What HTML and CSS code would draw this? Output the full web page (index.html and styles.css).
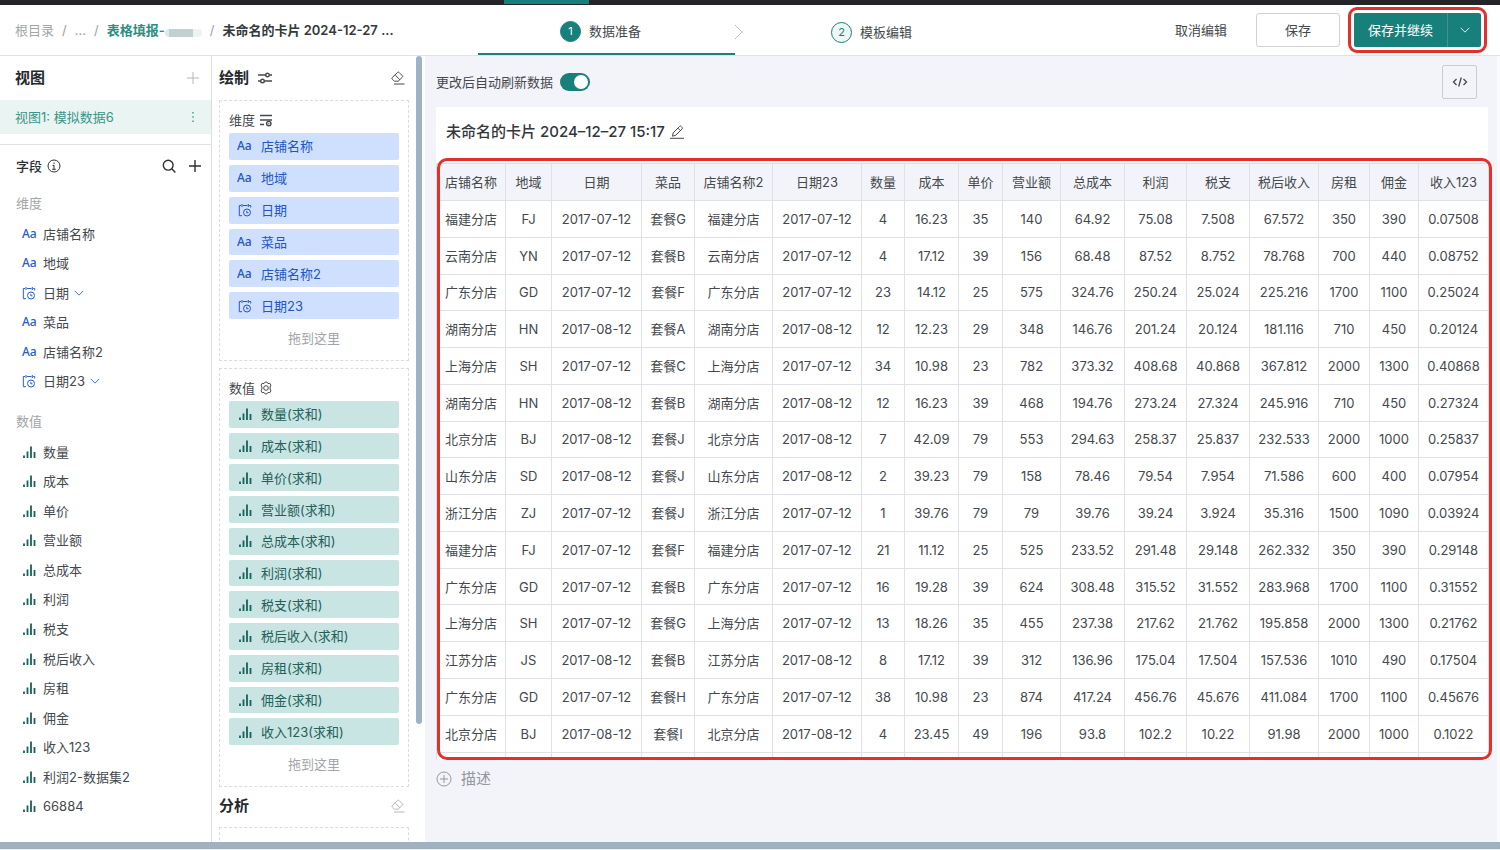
FILE: index.html
```html
<!DOCTYPE html>
<html lang="zh-CN">
<head>
  <meta charset="utf-8">
  <title>未命名的卡片 - 数据准备</title>
  <link rel="stylesheet" href="styles.css">
</head>
<body>
  <svg class="sprite" aria-hidden="true">
    <symbol id="i-plus" viewBox="0 0 14 14"><path d="M7 1v12M1 7h12"/></symbol>
    <symbol id="i-more" viewBox="0 0 14 14"><path d="M7 2v1.6M7 6.2v1.6M7 10.4V12"/></symbol>
    <symbol id="i-info" viewBox="0 0 14 14"><circle cx="7" cy="7" r="6"/><path d="M7 3.4v1.4M5.6 6.4H7v3.8M5.2 10.3h3.6"/></symbol>
    <symbol id="i-search" viewBox="0 0 14 14"><circle cx="6.2" cy="6.2" r="4.9"/><path d="M9.8 9.8l3.6 3.6"/></symbol>
    <symbol id="i-sliders" viewBox="0 0 14 14"><path d="M0 4h7.6M11.4 4H14M0 10h2.6M6.4 10H14"/><circle cx="9.5" cy="4" r="1.8"/><circle cx="4.5" cy="10" r="1.8"/></symbol>
    <symbol id="i-eraser" viewBox="0 0 14 14"><path d="M3.4 10.2L1.2 8a1 1 0 0 1 0-1.4l5.4-5.2a1 1 0 0 1 1.4 0l3.4 3.4a1 1 0 0 1 0 1.4l-4.2 4zM4.2 4l4.6 4.6M3 13h10.5"/></symbol>
    <symbol id="i-list" viewBox="0 0 14 14"><path d="M1 2.5h12M1 7h12M1 11.5h4"/><circle cx="9.8" cy="10.6" r="2.2"/><path d="M9.3 10.6h1"/></symbol>
    <symbol id="i-gear" viewBox="0 0 14 14"><path d="M5 2.6l1.1-1.5h1.8L9 2.6l1.900-.2 1 1.700L11.100 6v2l.8 1.900-1 1.700-1.900-.2-1.100 1.500H6.100L5 11.400l-1.900.2-1-1.700L2.900 8V6l-.8-1.900 1-1.700z"/><circle cx="7" cy="7" r="2.300"/></symbol>
    <symbol id="i-date" viewBox="0 0 14 14"><path d="M4 12.700H1.300V2.500H3M5 2.500h4.500M11.200 2.500h1.500v2M4 1v3M10.300 1v3"/><circle cx="9" cy="9.500" r="3.500"/><path d="M8.800 7.800v2h1.700"/></symbol>
    <symbol id="i-bars" viewBox="0 0 14 14"><path d="M2 10.500V13M5.500 6.500V13M9 1.500V13M12.500 7V13"/></symbol>
    <symbol id="i-down" viewBox="0 0 14 14"><path d="M2 4.500l5 5 5-5"/></symbol>
    <symbol id="i-right" viewBox="0 0 8 16"><path d="M0 1l7 7-7 7"/></symbol>
    <symbol id="i-pen" viewBox="0 0 14 14"><path d="M2.500 11.200l.7-3.400L9.600 1.400a1 1 0 0 1 1.500 0l1 1a1 1 0 0 1 0 1.500l-6.400 6.400zM8 3.200l2.400 2.400M0 13.300h14"/></symbol>
    <symbol id="i-code" viewBox="0 0 16 12"><path d="M4.500 3L1.500 6l3 3M11.500 3l3 3-3 3M9.300 1.500l-2.600 9"/></symbol>
    <symbol id="i-add" viewBox="0 0 16 16"><circle cx="8" cy="8" r="7"/><path d="M8 4v8M4 8h8"/></symbol>
  </svg>

  <div class="topbar"><span class="topbar-active"></span></div>

  <header class="header">
    <nav class="crumbs">
      <a href="#" class="muted">根目录</a><i>/</i>
      <a href="#" class="muted">...</a><i>/</i>
      <a href="#" class="folder">表格填报-<span class="smudge"></span></a><i>/</i>
      <span class="current">未命名的卡片 2024-12-27 ...</span>
    </nav>
    <div class="steps">
      <div class="step active"><b>1</b>数据准备</div>
      <svg class="step-arrow"><use href="#i-right"/></svg>
      <div class="step"><b>2</b>模板编辑</div>
    </div>
    <div class="actions">
      <button class="btn-text">取消编辑</button>
      <button class="btn">保存</button>
      <div class="btn-group">
        <button class="btn-main">保存并继续</button>
        <button class="btn-drop" aria-label="更多"><svg class="icon small"><use href="#i-down"/></svg></button>
      </div>
    </div>
  </header>

  <div class="main">
    <aside class="sidebar">
      <div class="panel-head">
        <h2>视图</h2>
        <button class="icon-btn light" aria-label="添加视图"><svg class="icon"><use href="#i-plus"/></svg></button>
      </div>
      <div class="view-item">
        <a href="#">视图1: 模拟数据6</a>
        <button class="icon-btn teal" aria-label="更多"><svg class="icon bold"><use href="#i-more"/></svg></button>
      </div>
      <div class="fields-head">
        <h3>字段</h3><svg class="icon"><use href="#i-info"/></svg>
        <button class="icon-btn push" aria-label="搜索"><svg class="icon bold"><use href="#i-search"/></svg></button>
        <button class="icon-btn" aria-label="添加字段"><svg class="icon bold"><use href="#i-plus"/></svg></button>
      </div>
      <h4>维度</h4>
      <ul class="fields dims" id="dimFields"></ul>
      <h4>数值</h4>
      <ul class="fields nums" id="numFields"></ul>
    </aside>

    <section class="draw">
      <div class="draw-body">
        <div class="draw-head">
          <h2>绘制</h2><svg class="icon bold"><use href="#i-sliders"/></svg>
          <button class="icon-btn push" aria-label="清空"><svg class="icon"><use href="#i-eraser"/></svg></button>
        </div>
        <div class="drop-box">
          <div class="drop-title">维度 <svg class="icon bold"><use href="#i-list"/></svg></div>
          <ul class="chips blue" id="dimChips"></ul>
          <p class="hint">拖到这里</p>
        </div>
        <div class="drop-box">
          <div class="drop-title">数值 <svg class="icon"><use href="#i-gear"/></svg></div>
          <ul class="chips green" id="numChips"></ul>
          <p class="hint">拖到这里</p>
        </div>
        <div class="draw-head analysis">
          <h2>分析</h2>
          <button class="icon-btn light push" aria-label="清空分析"><svg class="icon"><use href="#i-eraser"/></svg></button>
        </div>
        <div class="drop-box"></div>
      </div>
      <div class="scrollbar"><span></span></div>
    </section>

    <section class="content">
      <div class="toolbar">
        <label for="autoRefresh">更改后自动刷新数据</label>
        <input type="checkbox" class="switch" id="autoRefresh" checked>
        <button class="code-btn" aria-label="代码"><svg><use href="#i-code"/></svg></button>
      </div>
      <div class="card">
        <div class="card-title">
          <h1>未命名的卡片 2024–12–27 15:17</h1>
          <button class="icon-btn" aria-label="重命名"><svg class="icon"><use href="#i-pen"/></svg></button>
        </div>
        <div class="table-wrap">
          <table>
            <colgroup>
              <col><col><col><col><col><col><col><col><col><col><col><col><col><col><col><col><col>
            </colgroup>
            <thead><tr id="tableHead"></tr></thead>
            <tbody id="tableBody"></tbody>
          </table>
        </div>
      </div>
      <button class="describe"><svg><use href="#i-add"/></svg>描述</button>
    </section>
  </div>
  <div class="bottombar"></div>

  <script>
    const dims = ["店铺名称", "地域", "日期", "菜品", "店铺名称2", "日期23"];
    const nums = ["数量", "成本", "单价", "营业额", "总成本", "利润", "税支", "税后收入", "房租", "佣金", "收入123"];
    const extra = ["利润2-数据集2", "66884"];

    const rows = `福建分店 FJ 2017-07-12 套餐G 4 16.23 35 140 64.92 75.08 7.508 67.572 350 390 0.07508
云南分店 YN 2017-07-12 套餐B 4 17.12 39 156 68.48 87.52 8.752 78.768 700 440 0.08752
广东分店 GD 2017-07-12 套餐F 23 14.12 25 575 324.76 250.24 25.024 225.216 1700 1100 0.25024
湖南分店 HN 2017-08-12 套餐A 12 12.23 29 348 146.76 201.24 20.124 181.116 710 450 0.20124
上海分店 SH 2017-07-12 套餐C 34 10.98 23 782 373.32 408.68 40.868 367.812 2000 1300 0.40868
湖南分店 HN 2017-08-12 套餐B 12 16.23 39 468 194.76 273.24 27.324 245.916 710 450 0.27324
北京分店 BJ 2017-08-12 套餐J 7 42.09 79 553 294.63 258.37 25.837 232.533 2000 1000 0.25837
山东分店 SD 2017-08-12 套餐J 2 39.23 79 158 78.46 79.54 7.954 71.586 600 400 0.07954
浙江分店 ZJ 2017-07-12 套餐J 1 39.76 79 79 39.76 39.24 3.924 35.316 1500 1090 0.03924
福建分店 FJ 2017-07-12 套餐F 21 11.12 25 525 233.52 291.48 29.148 262.332 350 390 0.29148
广东分店 GD 2017-07-12 套餐B 16 19.28 39 624 308.48 315.52 31.552 283.968 1700 1100 0.31552
上海分店 SH 2017-07-12 套餐G 13 18.26 35 455 237.38 217.62 21.762 195.858 2000 1300 0.21762
江苏分店 JS 2017-08-12 套餐B 8 17.12 39 312 136.96 175.04 17.504 157.536 1010 490 0.17504
广东分店 GD 2017-07-12 套餐H 38 10.98 23 874 417.24 456.76 45.676 411.084 1700 1100 0.45676
北京分店 BJ 2017-08-12 套餐I 4 23.45 49 196 93.8 102.2 10.22 91.98 2000 1000 0.1022`;

    function icon(name, cls) {
      return `<svg class="icon ${cls || ""}"><use href="#i-${name}"/></svg>`;
    }

    function dimIcon(name) {
      return name.startsWith("日期") ? icon("date") : '<span class="aa">Aa</span>';
    }

    function fill(id, items) {
      document.getElementById(id).innerHTML = items.map(i => `<li>${i}</li>`).join("");
    }

    fill("dimFields", dims.map(d => dimIcon(d) + d + (d.startsWith("日期") ? icon("down", "small") : "")));
    fill("numFields", nums.concat(extra).map(n => icon("bars") + n));
    fill("dimChips", dims.map(d => dimIcon(d) + d));
    fill("numChips", nums.map(n => icon("bars") + n + "(求和)"));

    document.getElementById("tableHead").innerHTML =
      dims.concat(nums).map(h => `<th>${h}</th>`).join("");

    // shop and date columns appear twice in each row
    const body = document.getElementById("tableBody");
    rows.split("\n").forEach(line => {
      const c = line.split(" ");
      const cells = [c[0], c[1], c[2], c[3], c[0], c[2], ...c.slice(4)];
      body.insertRow().innerHTML = cells.map(v => `<td>${v}</td>`).join("");
    });
    // start of the next row, cut off by the card
    const last = body.insertRow();
    last.className = "cut";
    last.innerHTML = "<td></td>".repeat(17);
  </script>
</body>
</html>
```

FILE: styles.css
```css
* {
  box-sizing: border-box;
}
body {
  margin: 0;
  height: 100vh;
  display: flex;
  flex-direction: column;
  overflow: hidden;
  background: #fff;
  color: #45484d;
  font: 13px/20px Inter, "Noto Sans CJK SC", sans-serif;
}
h1, h2, h3, h4, p, ul {
  margin: 0;
  padding: 0;
}
ul {
  list-style: none;
}
a {
  color: inherit;
  text-decoration: none;
}
button {
  font: inherit;
  color: inherit;
  background: none;
  border: 0;
  padding: 0;
  cursor: pointer;
}
svg {
  fill: none;
  stroke: currentColor;
  flex: none;
}
.sprite {
  display: none;
}
.icon {
  display: block;
  width: 14px;
  height: 14px;
}
.icon.small {
  width: 12px;
  height: 12px;
}
.icon.bold {
  stroke-width: 1.4;
}
.icon-btn.light {
  color: #b4b7bb;
}
.icon-btn.teal {
  color: #3b9688;
}
.push {
  margin-left: auto;
}

/* header */
.topbar {
  flex: none;
  height: 5px;
  background: #242528;
}
.topbar-active {
  display: block;
  width: 85px;
  height: 4px;
  margin-left: 504px;
  background: #17807a;
}
.header {
  flex: none;
  display: flex;
  height: 51px;
  border-bottom: 1px solid #e0e2e6;
}
.crumbs {
  width: 478px;
  padding-left: 15px;
  display: flex;
  align-items: center;
  white-space: nowrap;
}
.crumbs i {
  margin: 0 8px;
  font-style: normal;
  color: #9a9da2;
}
.crumbs .muted {
  color: #a2a5a9;
}
.crumbs .folder {
  display: flex;
  align-items: center;
  color: #2b8e81;
  font-weight: 600;
}
.crumbs .current {
  color: #35383c;
  font-weight: 600;
}
.smudge {
  width: 37px;
  height: 8px;
  margin-top: 6px;
  border-radius: 4px;
  background: linear-gradient(90deg, #e1e9ea 4px, #c3d0d1 4px, #c3d0d1 28px, #edf2f2 28px);
}
.steps {
  display: flex;
  align-items: center;
}
.step {
  width: 257px;
  height: 50px;
  padding-top: 4px;
  display: flex;
  align-items: center;
  justify-content: center;
  gap: 8px;
}
.step.active {
  padding-right: 12px;
  border-bottom: 2px solid #17807a;
}
.step b {
  width: 21px;
  height: 21px;
  border: 1px solid #17807a;
  border-radius: 50%;
  color: #17807a;
  background: #eef7f6;
  font-size: 11px;
  font-weight: 400;
  line-height: 19px;
  text-align: center;
}
.step.active b {
  background: #17807a;
  color: #fff;
}
.step-arrow {
  width: 8px;
  height: 16px;
  margin-top: 4px;
  color: #b9bcc0;
}
.actions {
  margin-left: auto;
  padding-right: 13px;
  display: flex;
  align-items: center;
}
.btn-text {
  margin-right: 29px;
}
.btn {
  width: 84px;
  height: 34px;
  margin-right: 8px;
  border: 1px solid #cfd1d5;
  border-radius: 3px;
}
.btn-group {
  display: flex;
  padding: 3px;
  border: 3px solid #e0312d;
  border-radius: 9px;
  color: #fff;
}
.btn-group button {
  height: 34px;
  background: #17807a;
}
.btn-group .btn-main {
  width: 93px;
  border-radius: 2px 0 0 2px;
}
.btn-group .btn-drop {
  width: 34px;
  display: flex;
  align-items: center;
  justify-content: center;
  border-left: 1px solid #3f9690;
  border-radius: 0 2px 2px 0;
}

/* columns */
.main {
  flex: 1;
  min-height: 0;
  display: flex;
}
.sidebar {
  flex: none;
  width: 212px;
  border-right: 1px solid #dcdee2;
  overflow: hidden;
}
h2 {
  font-size: 15px;
  font-weight: 700;
  color: #25272b;
}
.panel-head {
  display: flex;
  align-items: center;
  justify-content: space-between;
  height: 44px;
  padding: 0 11px 0 15px;
}
.view-item {
  display: flex;
  align-items: center;
  justify-content: space-between;
  height: 34px;
  padding: 0 11px 0 15px;
  background: #eaf4f2;
  color: #3b9688;
}
.fields-head {
  display: flex;
  align-items: center;
  gap: 5px;
  height: 42px;
  margin-top: 10px;
  padding: 0 9px 0 16px;
  border-top: 1px solid #e0e2e6;
  color: #2c2f33;
}
.fields-head .icon-btn + .icon-btn {
  margin-left: 7px;
}
h3 {
  font-size: 13px;
  font-weight: 500;
}
h4 {
  height: 33px;
  padding: 7px 16px;
  font-size: 13px;
  font-weight: 400;
  color: #a2a5a9;
}
.fields {
  display: grid;
  grid-auto-rows: 1fr;
  padding-left: 22px;
}
.fields.dims {
  height: 177px;
  margin-bottom: 8px;
}
.fields.nums {
  height: 384px;
}
.fields li {
  display: flex;
  align-items: center;
}
.aa {
  width: 16px;
  font: 500 12px/20px "Noto Sans", sans-serif;
}
.fields .aa {
  margin-right: 5px;
}
.fields .icon:first-child {
  margin-right: 7px;
}
.fields .small {
  margin-left: 4px;
}
.dims .aa,
.dims .icon {
  color: #2a5cc8;
}
.nums .icon,
.green .icon {
  color: #17625a;
  stroke-width: 1.8;
}

/* draw panel */
.draw {
  flex: none;
  width: 213px;
  display: flex;
}
.draw-body {
  flex: 1;
  padding-left: 7px;
  overflow: hidden;
}
.draw-head {
  display: flex;
  align-items: center;
  gap: 9px;
  height: 44px;
  padding-right: 11px;
}
.drop-box {
  width: 190px;
  min-height: 40px;
  margin-bottom: 7px;
  padding: 9px;
  border: 1px dashed #dadce0;
}
.drop-title {
  display: flex;
  align-items: center;
  gap: 4px;
  margin-bottom: 3px;
}
.draw-head.analysis {
  height: 38px;
  margin-top: -7px;
  margin-bottom: 2px;
}
.chips {
  display: grid;
  grid-auto-rows: 1fr;
  gap: 5px;
}
.chips li {
  display: flex;
  align-items: center;
  padding-left: 8px;
  border-radius: 2px;
}
.chips .aa,
.chips .icon {
  margin-right: 8px;
}
.chips .icon {
  margin-left: 1px;
  margin-right: 9px;
}
.chips.blue {
  height: 186px;
}
.chips.blue li {
  background: #cfe0fe;
  color: #2455c3;
}
.chips.green {
  height: 344px;
}
.chips.green li {
  background: #c8e4e3;
  color: #245f58;
}
.hint {
  margin-top: 9px;
  margin-bottom: 3px;
  text-align: center;
  color: #a2a5a9;
}
.scrollbar {
  width: 9px;
}
.scrollbar span {
  display: block;
  width: 6px;
  height: 85%;
  border-radius: 3px;
  background: #9fb2c6;
}

/* content */
.content {
  flex: 1;
  min-width: 0;
  padding: 0 9px 0 11px;
  border-right: 3px solid #fafbfc;
  background: #f3f4f9;
}
.toolbar {
  display: flex;
  align-items: center;
  gap: 7px;
  height: 51px;
}
.switch {
  appearance: none;
  width: 30px;
  height: 18px;
  margin: 0;
  padding: 2px;
  border-radius: 9px;
  background: #b9bcc0;
}
.switch::before {
  content: "";
  display: block;
  width: 14px;
  height: 14px;
  border-radius: 50%;
  background: #fff;
}
.switch:checked {
  padding-left: 14px;
  background: #17807a;
}
.code-btn {
  display: flex;
  align-items: center;
  justify-content: center;
  width: 35px;
  height: 34px;
  margin: 0 11px 0 auto;
  border: 1px solid #c9ccd1;
  border-radius: 2px;
}
.code-btn svg {
  width: 16px;
  height: 12px;
  stroke-width: 1.3;
}
.card {
  background: #fff;
}
.card-title {
  display: flex;
  align-items: center;
  gap: 5px;
  height: 50px;
  padding-left: 10px;
}
h1 {
  font-size: 15px;
  font-weight: 500;
  color: #33363b;
}
/* frame drawn over the table edges */
.table-wrap {
  position: relative;
  padding-top: 6px;
}
.table-wrap::after {
  content: "";
  position: absolute;
  inset: 1px -4px 0 1px;
  border: 3px solid #e0312d;
  border-radius: 10px;
  pointer-events: none;
}
table {
  width: 100%;
  height: 597px;
  table-layout: fixed;
  border-collapse: collapse;
}
col { width: 69px; }
col:nth-child(2) { width: 46px; }
col:nth-child(3) { width: 90px; }
col:nth-child(4) { width: 53px; }
col:nth-child(5) { width: 78px; }
col:nth-child(6) { width: 89px; }
col:nth-child(7) { width: 43px; }
col:nth-child(8) { width: 54px; }
col:nth-child(9) { width: 44px; }
col:nth-child(10) { width: 58px; }
col:nth-child(11) { width: 64px; }
col:nth-child(12) { width: 62px; }
col:nth-child(13) { width: 63px; }
col:nth-child(15) { width: 51px; }
col:nth-child(16) { width: 49px; }
col:nth-child(17) { width: 70px; }
th, td {
  padding: 0;
  border: 1px solid #dfe1e6;
  text-align: center;
  font-weight: 400;
  white-space: nowrap;
}
th {
  height: 37px;
  background: #f3f4f9;
}
.cut {
  height: 8px;
}
.cut td {
  border-bottom: 0;
}
.describe {
  display: flex;
  align-items: center;
  gap: 9px;
  margin-top: 9px;
  font-size: 15px;
  color: #94979c;
}
.describe svg {
  width: 16px;
  height: 16px;
}
.bottombar {
  flex: none;
  height: 8px;
  background: #a0b1c0;
  border-bottom: 1px solid #e6eaee;
}
```
